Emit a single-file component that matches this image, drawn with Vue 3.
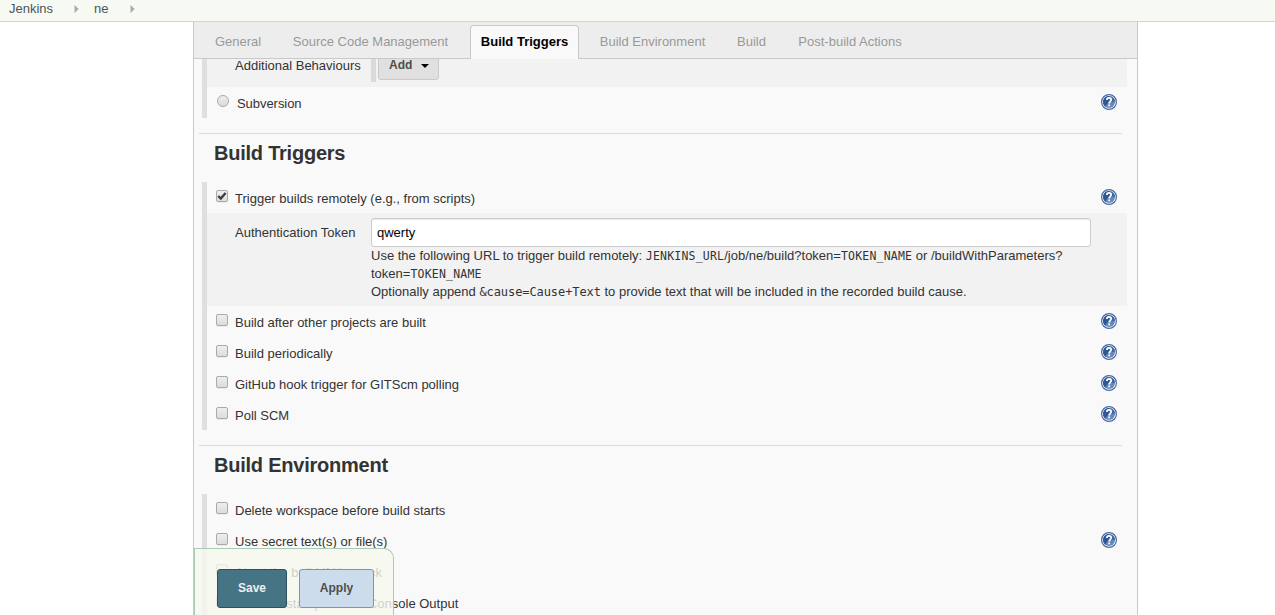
<script setup>
import { h } from 'vue'

const tabs = [
  { label: 'General', width: 66 },
  { label: 'Source Code Management', width: 177 },
  { label: 'Build Triggers', width: 109, active: true },
  { label: 'Build Environment', width: 125 },
  { label: 'Build', width: 51 },
  { label: 'Post-build Actions', width: 124 },
]
const laterTriggers = [
  'Build after other projects are built',
  'Build periodically',
  'GitHub hook trigger for GITScm polling',
  'Poll SCM',
]
const environment = [
  { label: 'Delete workspace before build starts' },
  { label: 'Use secret text(s) or file(s)', help: true },
  { label: "Abort the build if it's stuck" },
  { label: 'Add timestamps to the Console Output' },
]

const HelpIcon = () =>
  h('svg', { width: 16, height: 16, viewBox: '0 0 16 16' }, [
    h('circle', { cx: 8, cy: 8, r: 7.4, fill: '#fff', stroke: '#4468a4', 'stroke-width': 1.2 }),
    h('circle', { cx: 8, cy: 8, r: 6, fill: '#6788b8' }),
    h('path', { d: 'M2.4 6.1A6 6 0 0 1 8 2v5.6L4.1 12.5A6 6 0 0 1 2.4 6.1Z', fill: '#2d5797' }),
    h('path', { d: 'M8 2a6 6 0 0 1 6 6L8 8Z', fill: '#41699f' }),
    h('path', {
      d: 'M5.9 5.9C5.9 4.5 6.8 3.9 8 3.9c1.3 0 2.2.7 2.2 1.8 0 1.6-2 1.7-2 3.7',
      fill: 'none', stroke: '#fff', 'stroke-width': 1.7,
    }),
    h('path', { d: 'M7.3 10.5h1.8v1.8H7.3z', fill: '#fff' }),
  ])
</script>

<template>
  <div class="page">
    <nav class="crumbs">
      <span class="crumb first">Jenkins</span>
      <svg class="arrow" width="5" height="8" viewBox="0 0 5 8"><path d="M.5 0v8L4.7 4Z" fill="#aaa" /></svg>
      <span class="crumb second">ne</span>
      <svg class="arrow" width="5" height="8" viewBox="0 0 5 8"><path d="M.5 0v8L4.7 4Z" fill="#aaa" /></svg>
    </nav>

    <main class="panel">
      <div class="tabs">
        <div v-for="t in tabs" :key="t.label" class="tab" :class="{ active: t.active }" :style="{ width: t.width + 'px' }">
          {{ t.label }}
        </div>
      </div>

      <section class="group">
        <div class="behaviours">
          <span class="behaviours-label">Additional Behaviours</span>
          <span class="bar"></span>
          <button class="add">Add
            <svg width="8" height="4" viewBox="0 0 8 4"><path d="M0 0h8L4 4Z" fill="#000" /></svg>
          </button>
        </div>
        <div class="row">
          <span class="radio"></span><span class="label sub">Subversion</span><HelpIcon class="help" />
        </div>
      </section>

      <h2>Build Triggers</h2>
      <section class="group">
        <div class="row">
          <span class="box">
            <svg width="12" height="12" viewBox="0 0 12 12"><path d="M2.2 6 4.8 8.5 9.6 3" fill="none" stroke="#3c3c3c" stroke-width="2.3" /></svg>
          </span>
          <span class="label">Trigger builds remotely (e.g., from scripts)</span><HelpIcon class="help" />
        </div>
        <div class="token">
          <span class="token-label">Authentication Token</span>
          <div class="field">
            <input type="text" value="qwerty" />
            <div class="desc">
              Use the following URL to trigger build remotely: <code class="name">JENKINS_URL</code>/job/ne/build?token=<code class="name">TOKEN_NAME</code> or /buildWithParameters?<br />token=<code class="name">TOKEN_NAME</code><br />Optionally append <code>&amp;cause=Cause+Text</code> to provide text that will be included in the recorded build cause.
            </div>
          </div>
        </div>
        <div v-for="t in laterTriggers" :key="t" class="row">
          <span class="box"></span><span class="label">{{ t }}</span><HelpIcon class="help" />
        </div>
      </section>

      <h2>Build Environment</h2>
      <section class="group">
        <div v-for="e in environment" :key="e.label" class="row">
          <span class="box"></span><span class="label">{{ e.label }}</span><HelpIcon v-if="e.help" class="help" />
        </div>
      </section>

      <div class="footer">
        <button class="save">Save</button>
        <button class="apply">Apply</button>
      </div>
    </main>
  </div>
</template>

<style>
html, body { overflow: hidden; background: #fff; }
</style>

<style scoped>
.page, .page * { box-sizing: border-box; }
.page {
  height: 615px; overflow: hidden; display: flex; flex-direction: column;
  font: 13px/18px "Liberation Sans", Arial, sans-serif; color: #333;
}
.crumbs {
  flex: none; height: 22px; padding-left: 9px; display: flex; align-items: flex-start;
  background: #f6faf2; border-bottom: 1px solid #d3d4d0; color: #4d545d;
}
.crumb { display: block; white-space: nowrap; }
.crumb.first { width: 65px; }
.crumb.second { width: 36px; }
.arrow { margin: 5px 15px 0 0; }
.crumb.second + .arrow { margin-right: 0; }
.panel {
  position: relative; flex: 1; min-height: 0; width: 945px; margin-left: 193px; overflow: hidden;
  background: #f9f9f9; border: solid #c9c9c9; border-width: 0 1px;
}
.tabs {
  height: 37px; padding: 3px 0 0 11px; display: flex; gap: 11px; background: #ededed; border-bottom: 1px solid #c9c9c9;
}
.tab {
  flex: none; height: 33px; display: flex; align-items: center; justify-content: center;
  padding-top: 1px; color: #999; white-space: nowrap;
}
.tab.active {
  height: 34px; padding: 0 0 2px; background: #f9f9f9; color: #000; font-weight: bold;
  border: 1px solid #c9c9c9; border-bottom: 0; border-radius: 4px 4px 0 0;
}
.group { margin-left: 8px; width: 925px; border-left: 5px solid #dfdfdf; }
.behaviours { height: 28px; display: flex; background: #f2f2f2; overflow: hidden; }
.behaviours-label { width: 164px; padding-left: 28px; margin-top: -2px; white-space: nowrap; }
.bar { width: 5px; height: 23px; background: #dadada; }
.add {
  width: 61px; height: 30px; margin: -9px 0 0 2px; padding: 0 9px 1px 10px; display: flex; align-items: center;
  justify-content: space-between; background: #e0e0e0; border: 1px solid #c9c9c9; border-radius: 3px;
  color: #4d4d4d; font: bold 12px "Liberation Sans", Arial, sans-serif;
}
.add svg { margin-top: 2px; }
.row { height: 31px; padding: 0 10px 0 9px; display: flex; align-items: flex-start; }
.box {
  flex: none; width: 12px; height: 12px; margin-top: 8px; display: flex;
  border: 1px solid #aaa; border-radius: 2px; background: linear-gradient(#eee, #dcdcdc);
  box-shadow: 0 1px 0 #ececec;
}
.box svg { flex: none; margin: -1px 0 0 -1px; }
.radio {
  flex: none; width: 12px; height: 12px; margin: 8px 0 0 1px; border: 1px solid #aaa; border-radius: 50%;
  background: linear-gradient(#eee, #dadada);
}
.label { flex: 1; margin: 8px 0 0 7px; white-space: nowrap; }
.label.sub { margin-left: 8px; letter-spacing: -.05px; }
.help { flex: none; margin-top: 7px; }
h2 {
  height: 49px; width: 923px; margin: 15px 0 0 5px; padding: 7px 0 0 15px; border-top: 1px solid #ddd;
  font-size: 20px; line-height: 24px; font-weight: bold; color: #333; letter-spacing: -.23px;
}
.token { height: 93px; padding-top: 5px; display: flex; background: #f2f2f2; }
.token-label { width: 164px; padding: 6px 0 0 28px; white-space: nowrap; }
.field { width: 720px; }
.field input {
  display: block; width: 720px; height: 29px; padding: 0 5px; border: 1px solid #ccc; border-radius: 3px;
  background: #fff; box-shadow: inset 0 1px 1px #e9e9e9; color: #000; font: 13px "Liberation Sans", Arial, sans-serif;
}
.desc { white-space: nowrap; }
code { font: 12px/1 "DejaVu Sans Mono", monospace; letter-spacing: -.08px; }
code.name { font-size: 11.5px; letter-spacing: .2px; }
.footer {
  position: absolute; left: 0; bottom: 0; width: 200px; height: 67px; padding: 20px 0 0 22px; display: flex; gap: 12px;
  background: rgba(246, 248, 238, .8); border: solid #a9cbb5; border-width: 1px 1px 0 1px; border-radius: 0 10px 0 0;
}
.footer button { height: 39px; padding: 0 0 2px; border-radius: 3px; font: bold 12px "Liberation Sans", Arial, sans-serif; }
.save { width: 70px; background: #457585; border: 1px solid #2e5260; color: #eee; }
.apply { width: 75px; background: #ccdced; border: 1px solid #6b99cf; color: #4d4d4d; }
</style>
